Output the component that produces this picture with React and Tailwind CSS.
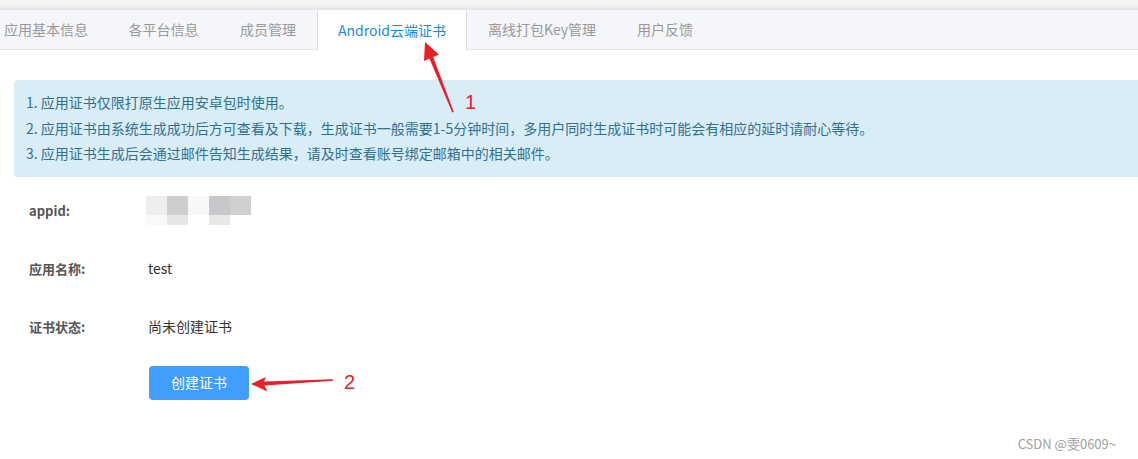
import React from "react";

const tabs = [
  { name: "应用基本信息", w: "w-[124px]" },
  { name: "各平台信息", w: "w-[111px]" },
  { name: "成员管理", w: "w-[98px]" },
  { name: "Android云端证书", w: "w-[150px]" },
  { name: "离线打包Key管理", w: "w-[150px]" },
  { name: "用户反馈", w: "w-[96px]" },
];

const notes = [
  "1. 应用证书仅限打原生应用安卓包时使用。",
  "2. 应用证书由系统生成成功后方可查看及下载，生成证书一般需要1-5分钟时间，多用户同时生成证书时可能会有相应的延时请耐心等待。",
  "3. 应用证书生成后会通过邮件告知生成结果，请及时查看账号绑定邮箱中的相关邮件。",
];

// pixelated appid placeholder
const BlurredId = () => (
  <div className="flex flex-col">
    <div className="flex h-[19px]">
      <div className="w-[21px] bg-[#eeeeee]"></div>
      <div className="w-[21px] bg-[#cfcdcf]"></div>
      <div className="w-[21px] bg-[#f8f8f8]"></div>
      <div className="w-[21px] bg-[#c8c8cc]"></div>
      <div className="w-[21px] bg-[#d0cfd0]"></div>
    </div>
    <div className="flex h-[10px]">
      <div className="w-[21px] bg-[#f9f9f9]"></div>
      <div className="w-[21px] bg-[#e6e6e6]"></div>
      <div className="w-[21px] bg-white"></div>
      <div className="w-[21px] bg-[#e8e8ea]"></div>
      <div className="w-[21px] bg-white"></div>
    </div>
  </div>
);

const Row = ({ label, children }) => (
  <div className="flex items-center h-[58px] pl-[15px]">
    <div className="w-[119px] text-[13px] font-bold text-[#555]">{label}</div>
    <div className="text-[14px] text-[#333]">{children}</div>
  </div>
);

const Annotations = () => (
  <svg className="absolute inset-0 pointer-events-none" width="1138" height="459" viewBox="0 0 1138 459">
    <polygon
      fill="#e8202a"
      points="425,42 439,54.5 433.2,57 453.8,112 452.2,112.6 429.4,58.5 424,61"
    />
    <polygon
      fill="#e8202a"
      points="251,384 266,377 264,381.4 333,379.3 333,380.8 264.5,385.6 267.5,391.5"
    />
    <text x="465" y="109" fill="#e62129" fontSize="20" fontFamily="Liberation Sans, Arial, sans-serif">1</text>
    <text x="344" y="389" fill="#e62129" fontSize="20" fontFamily="Liberation Sans, Arial, sans-serif">2</text>
  </svg>
);

export default function App() {
  return (
    <div
      className="relative w-[1138px] h-[459px] overflow-hidden bg-white"
      style={{ fontFamily: '"Noto Sans CJK SC", "Noto Sans", sans-serif' }}
    >
      <div className="h-[10px] bg-linear-to-b from-[#f5f5f5] via-[#f2f2f2] to-[#e2e2e4]"></div>

      <div className="flex h-[40px] bg-[#f5f6fa] border-b border-[#e2e3ea]">
        <div className="flex -ml-[16px]">
          {tabs.map((t, i) =>
            i === 3 ? (
              <div
                key={t.name}
                className={`${t.w} shrink-0 flex justify-center items-center h-[40px] bg-white border-x border-[#dcdee4] text-[14px] text-[#1e88f5] -mb-px`}
              >
                {t.name}
              </div>
            ) : (
              <div key={t.name} className={`${t.w} shrink-0 flex justify-center items-center text-[14px] text-[#999]`}>
                {t.name}
              </div>
            )
          )}
        </div>
      </div>

      <div className="pt-[30px] pl-[14px]">
        <div className="bg-[#d9edf7] rounded-l-[4px] py-[10px] px-3 text-[14px] leading-[25.5px] text-[#31708f]">
          {notes.map((n) => (
            <div key={n}>{n}</div>
          ))}
        </div>

        <div className="mt-[5px]">
          <Row label="appid:">
            <div className="-ml-[2px]">
              <BlurredId />
            </div>
          </Row>
          <Row label="应用名称:">test</Row>
          <Row label="证书状态:">尚未创建证书</Row>
        </div>

        <div className="mt-[10px] pl-[135px]">
          <button className="w-[100px] h-[34px] rounded-[4px] bg-[#409eff] text-white text-[14px]">
            创建证书
          </button>
        </div>
      </div>

      <div className="absolute right-[22px] bottom-[6px] text-[13px] text-[#a0a0a0]">CSDN @雯0609~</div>

      <Annotations />
    </div>
  );
}
